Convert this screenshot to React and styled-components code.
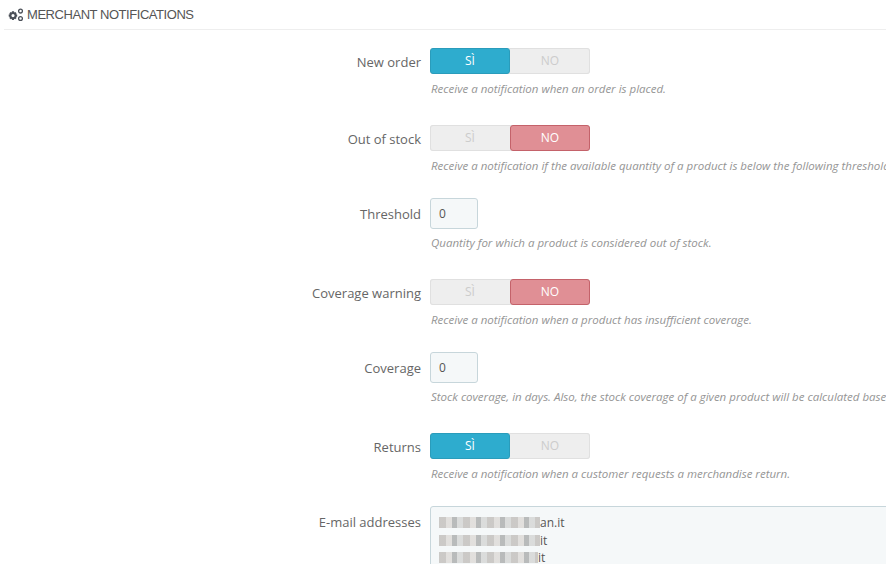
import React from 'react';
import styled, { createGlobalStyle } from 'styled-components';

const GlobalStyle = createGlobalStyle`
  html, body {
    margin: 0;
    padding: 0;
    background: #fff;
    overflow: hidden;
  }
`;

const Panel = styled.div`
  width: 886px;
  height: 564px;
  overflow: hidden;
  font-family: "Open Sans", sans-serif;
  font-size: 13px;
  color: #666;
`;

const Heading = styled.h3`
  display: flex;
  align-items: center;
  gap: 3px;
  margin: 0 0 14px 4px;
  height: 29px;
  padding-left: 4px;
  border-bottom: 1px solid #eee;
  font-family: "Liberation Sans", sans-serif;
  font-weight: 400;
  font-size: 13px;
  letter-spacing: -0.45px;
  color: #555;
  svg { flex: none; }
`;

const Row = styled.div`
  display: flex;
  height: 77px;
`;

const Label = styled.label`
  flex: none;
  width: 421px;
  padding-top: ${p => (p.$big ? '7px' : '9px')};
  box-sizing: border-box;
  text-align: right;
  line-height: 18px;
  color: #666;
`;

const Field = styled.div`
  margin-left: 9px;
  flex: none;
  width: 456px;
  overflow: hidden;
`;

const Switch = styled.div`
  display: flex;
  width: 160px;
  height: 26px;
  margin-top: 4px;
  border-radius: 3px;
  background: #eee;
  box-shadow: inset 0 0 0 1px #e0e0e0;
`;

const SwitchOption = styled.span`
  width: 80px;
  box-sizing: border-box;
  text-align: center;
  line-height: 25px;
  font-size: 12px;
  border-radius: 3px;
  color: #ccc;
  ${p => p.$on === 'yes' && 'background: #2eacce; color: #fff; border: 1px solid #2a9cbb; line-height: 23px;'}
  ${p => p.$on === 'no' && 'background: #e08f95; color: #fff; border: 1px solid #c4626a; line-height: 23px;'}
`;

const NumberBox = styled.div`
  width: 48px;
  height: 31px;
  box-sizing: border-box;
  padding-left: 8px;
  border: 1px solid #c7d6db;
  border-radius: 3px;
  background: #f5f8f9;
  line-height: 29px;
  font-size: 12px;
  color: #555;
`;

const Help = styled.p`
  margin: ${p => (p.$big ? '6px' : '7px')} 0 0 1px;
  white-space: nowrap;
  font-size: 11.5px;
  line-height: 16px;
  font-style: italic;
  color: #959595;
`;

const AddressBox = styled.div`
  width: 480px;
  height: 80px;
  box-sizing: border-box;
  padding: 7px 8px;
  border: 1px solid #c7d6db;
  border-radius: 3px;
  background: #f5f8f9;
  font-size: 12px;
  line-height: 17.5px;
  color: #555;
`;

const AddressLine = styled.div`
  display: flex;
  align-items: center;
`;

const Blur = styled.span`
  display: inline-block;
  width: ${p => p.$w}px;
  height: 11px;
  background: repeating-linear-gradient(90deg, #c4c1be 0 7px, #dedbd8 7px 13px, #aeb0b0 13px 18px, #d6d7d6 18px 24px);
  opacity: 0.85;
`;

const GearsIcon = () => (
  <svg width="16" height="14" viewBox="0 0 16 14" aria-hidden="true">
    <path
      fill="#4a4f57"
      fillRule="evenodd"
      d="M4 3.2h2l.3 1.2 1-.5 1.3 1.3-.6 1 1.2.4v2l-1.2.3.6 1-1.4 1.4-1-.6-.3 1.2H4l-.3-1.2-1 .6-1.4-1.4.6-1L.7 8.6v-2l1.2-.4-.6-1 1.4-1.3 1 .5zM5 6a1.6 1.6 0 1 0 0 3.200a1.600 1.600 0 0 0 0-3.200z"
    />
    <path
      fill="none"
      stroke="#4a4f57"
      strokeWidth="1.300"
      d="M12.500 1.200a1.900 1.900 0 1 0 0 3.800a1.900 1.900 0 0 0 0-3.800zM12.500 8.600a1.900 1.900 0 1 0 0 3.800a1.900 1.900 0 0 0 0-3.800z"
    />
  </svg>
);

const Toggle = ({ on }) => (
  <Switch>
    <SwitchOption $on={on ? 'yes' : undefined}>SÌ</SwitchOption>
    <SwitchOption $on={on ? undefined : 'no'}>NO</SwitchOption>
  </Switch>
);

function App() {
  return (
    <Panel>
      <GlobalStyle />
      <Heading><GearsIcon />MERCHANT NOTIFICATIONS</Heading>

      <Row>
        <Label>New order</Label>
        <Field>
          <Toggle on />
          <Help>Receive a notification when an order is placed.</Help>
        </Field>
      </Row>
      <Row>
        <Label>Out of stock</Label>
        <Field>
          <Toggle />
          <Help>Receive a notification if the available quantity of a product is below the following threshold.</Help>
        </Field>
      </Row>
      <Row>
        <Label $big>Threshold</Label>
        <Field>
          <NumberBox>0</NumberBox>
          <Help $big>Quantity for which a product is considered out of stock.</Help>
        </Field>
      </Row>
      <Row>
        <Label>Coverage warning</Label>
        <Field>
          <Toggle />
          <Help>Receive a notification when a product has insufficient coverage.</Help>
        </Field>
      </Row>
      <Row>
        <Label $big>Coverage</Label>
        <Field>
          <NumberBox>0</NumberBox>
          <Help $big>Stock coverage, in days. Also, the stock coverage of a given product will be calculated based on this number.</Help>
        </Field>
      </Row>
      <Row>
        <Label>Returns</Label>
        <Field>
          <Toggle on />
          <Help>Receive a notification when a customer requests a merchandise return.</Help>
        </Field>
      </Row>
      <Row>
        <Label $big>E-mail addresses</Label>
        <Field>
          <AddressBox>
            <AddressLine><Blur $w={101} />an.it</AddressLine>
            <AddressLine><Blur $w={101} />it</AddressLine>
            <AddressLine><Blur $w={99} />it</AddressLine>
          </AddressBox>
        </Field>
      </Row>
    </Panel>
  );
}

export default App;
